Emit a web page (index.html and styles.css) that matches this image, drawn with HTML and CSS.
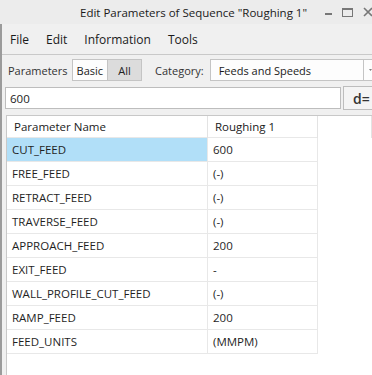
FILE: index.html
```html
<!DOCTYPE html>
<html lang="en">
  <head>
    <meta charset="UTF-8" />
    <meta name="viewport" content="width=device-width, initial-scale=1.0" />
    <title>Edit Parameters of Sequence "Roughing 1"</title>
    <link rel="stylesheet" href="styles.css">
  </head>
  <body>
    <div class="titlebar">
      <span class="title">Edit Parameters of Sequence "Roughing 1"</span>
      <div class="controls">
        <span class="ctl-min"></span>
        <span class="ctl-max"></span>
        <svg class="ctl-close" width="10" height="10" viewBox="0 0 10 10">
          <path d="M1 1 L9 9 M9 1 L1 9" stroke="#777" stroke-width="1.6" />
        </svg>
      </div>
    </div>
    <div class="window">
      <div class="menubar">
        <span>File</span>
        <span>Edit</span>
        <span>Information</span>
        <span>Tools</span>
      </div>
      <div class="toolbar">
        <span class="label">Parameters</span>
        <div class="segment">
          <button class="seg">Basic</button>
          <button class="seg active">All</button>
        </div>
        <span class="label cat">Category:</span>
        <div class="dropdown">
          <span>Feeds and Speeds</span>
          <span class="arrowbox">
            <svg width="7" height="4" viewBox="0 0 7 4">
              <path d="M0 0 L7 0 L3.5 4 Z" fill="#555" />
            </svg>
          </span>
        </div>
      </div>
      <div class="inputrow">
        <input type="text" class="value" value="600" />
        <button class="dbtn">d=</button>
      </div>
      <div class="grid">
        <table>
          <thead>
            <tr>
              <th class="c1">Parameter Name</th>
              <th class="c2">Roughing 1</th>
              <th class="c3"></th>
            </tr>
          </thead>
          <tbody>
            <tr><td class="c1 selected">CUT_FEED</td><td class="c2">600</td><td class="c3"></td></tr>
            <tr><td class="c1">FREE_FEED</td><td class="c2">(-)</td><td class="c3"></td></tr>
            <tr><td class="c1">RETRACT_FEED</td><td class="c2">(-)</td><td class="c3"></td></tr>
            <tr><td class="c1">TRAVERSE_FEED</td><td class="c2">(-)</td><td class="c3"></td></tr>
            <tr><td class="c1">APPROACH_FEED</td><td class="c2">200</td><td class="c3"></td></tr>
            <tr><td class="c1">EXIT_FEED</td><td class="c2">-</td><td class="c3"></td></tr>
            <tr><td class="c1">WALL_PROFILE_CUT_FEED</td><td class="c2">(-)</td><td class="c3"></td></tr>
            <tr><td class="c1">RAMP_FEED</td><td class="c2">200</td><td class="c3"></td></tr>
            <tr><td class="c1">FEED_UNITS</td><td class="c2">(MMPM)</td><td class="c3"></td></tr>
          </tbody>
        </table>
      </div>
    </div>
  </body>
</html>
```
FILE: styles.css
```css
body {
  margin: 0;
  width: 372px;
  height: 375px;
  overflow: hidden;
  background-color: #f0f0f0;
  font-family: "Open Sans", "Noto Sans", sans-serif;
  color: #1a1a1a;
}

.titlebar {
  display: flex;
  align-items: center;
  height: 24px;
  background-color: #ececec;
  font-size: 11.5px;
  padding-left: 80px;
  white-space: nowrap;
  overflow: hidden;
}

.title {
  flex-shrink: 0;
}

.controls {
  display: flex;
  align-items: center;
  flex-shrink: 0;
  margin-left: 18px;
  gap: 10px;
}

.ctl-min {
  width: 7px;
  height: 2px;
  background-color: #777;
  margin-top: 3px;
}

.ctl-max {
  width: 9px;
  height: 6px;
  border: 1px solid #777;
  border-top-width: 2px;
}

.ctl-close {
  flex-shrink: 0;
}

.window {
  display: flex;
  flex-direction: column;
  border-left: 2px solid #9b9b9b;
  height: 351px;
  overflow: hidden;
}

.menubar {
  display: flex;
  align-items: center;
  height: 30px;
  flex-shrink: 0;
  padding-left: 8px;
  gap: 17px;
  font-size: 12px;
  border-bottom: 1px solid #c9c9c9;
}

.toolbar {
  display: flex;
  align-items: center;
  height: 22px;
  flex-shrink: 0;
  margin-top: 4px;
  padding-left: 6px;
  font-size: 11px;
  white-space: nowrap;
}

.label {
  color: #333;
}

.segment {
  display: flex;
  margin-left: 4px;
  border: 1px solid #c4c4c4;
}

.seg {
  font: inherit;
  height: 20px;
  padding: 0 4px;
  background-color: #fdfdfd;
  border: 0;
  color: #222;
}

.seg.active {
  width: 34px;
  background-color: #dcdcdc;
  border-left: 1px solid #c4c4c4;
}

.cat {
  margin-left: 13px;
}

.dropdown {
  display: flex;
  align-items: center;
  flex: 1;
  margin-left: 6px;
  height: 20px;
  border: 1px solid #c4c4c4;
  border-right: 0;
  background-color: #fdfdfd;
  padding-left: 8px;
}

.arrowbox {
  display: flex;
  align-items: center;
  margin-left: auto;
  height: 20px;
  padding-left: 5px;
  width: 3px;
  overflow: hidden;
  border-left: 1px solid #c4c4c4;
}

.inputrow {
  display: flex;
  align-items: center;
  flex-shrink: 0;
  margin-top: 5px;
  padding-left: 3px;
  height: 24px;
}

.value {
  width: 336px;
  height: 22px;
  box-sizing: border-box;
  flex-shrink: 0;
  border: 1px solid #bdbdbd;
  background-color: #fff;
  font: inherit;
  font-size: 11.5px;
  padding: 0 4px;
  color: #222;
}

.dbtn {
  flex: 1;
  margin-left: 2px;
  height: 24px;
  border: 1px solid #bdbdbd;
  border-right: 0;
  background-color: #f4f4f4;
  font: inherit;
  font-size: 14px;
  font-weight: 600;
  text-align: left;
  padding-left: 9px;
  color: #333;
}

.grid {
  flex: 1;
  margin-top: 5px;
  margin-left: 4px;
  border-top: 1px solid #c8c8c8;
  border-left: 1px solid #c8c8c8;
  background-color: #fff;
}

table {
  border-collapse: collapse;
  font-size: 11.5px;
  table-layout: fixed;
  width: 100%;
}

th {
  font-weight: normal;
  text-align: left;
  height: 21px;
  padding: 0 0 0 7px;
  border-right: 1px solid #e3e3e3;
  color: #1a1a1a;
}

td {
  height: 23px;
  padding: 0 0 0 5px;
  border-top: 1px solid #e8e8e8;
  border-right: 1px solid #e8e8e8;
  color: #1f1f1f;
}

th.c1 {
  width: 193px;
}

td.c1 {
  width: 195px;
}

th.c2 {
  width: 102px;
}

td.c2 {
  width: 104px;
}

td.c3 {
  border: 0;
}

tbody tr:last-child td.c1,
tbody tr:last-child td.c2 {
  border-bottom: 1px solid #e8e8e8;
}

.selected {
  background-color: #b1dff8;
}
```
